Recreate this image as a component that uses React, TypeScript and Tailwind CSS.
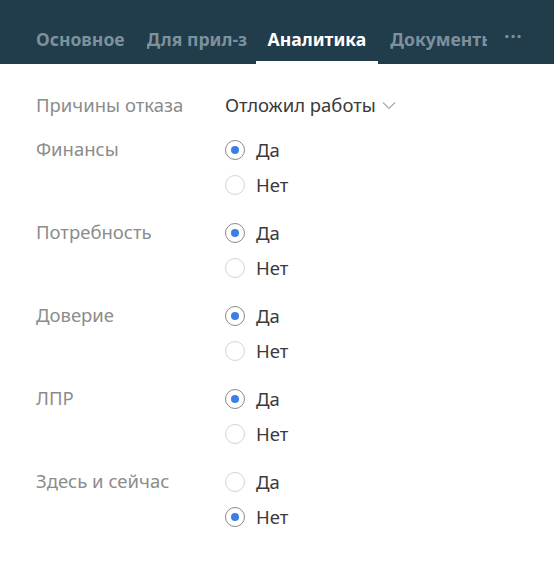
import { useState } from "react";

const font = { fontFamily: '"Noto Sans", "Open Sans", sans-serif' };

type Question = { label: string; value: "Да" | "Нет" };

const questions: Question[] = [
  { label: "Финансы", value: "Да" },
  { label: "Потребность", value: "Да" },
  { label: "Доверие", value: "Да" },
  { label: "ЛПР", value: "Да" },
  { label: "Здесь и сейчас", value: "Нет" },
];

const Radio = ({ checked, label }: { checked: boolean; label: string }) => (
  <label className="flex items-center h-[35px] gap-[11px] cursor-pointer">
    <span
      className={`w-[20px] h-[20px] rounded-full border flex items-center justify-center ${
        checked ? "border-[#8a8a8a]" : "border-[#d4d4d4]"
      }`}
    >
      {checked && <span className="w-[8px] h-[8px] rounded-full bg-[#3d7ee6]"></span>}
    </span>
    <span className="text-[18.5px] text-[#3a3a3a]">{label}</span>
  </label>
);

// Tab Item
const Tab = ({ label, active, className }: { label: string; active?: boolean; className?: string }) => (
  <div
    className={`h-full flex items-center shrink-0 overflow-hidden border-b-[3px] ${
      active ? "border-white px-[12px]" : "border-transparent"
    } ${className ?? ""}`}
  >
    <span
      className={`text-[17.6px] font-bold whitespace-nowrap pt-[18px] ${
        active ? "text-white" : "text-[#7d919c]"
      }`}
    >
      {label}
    </span>
  </div>
);

export default function App() {
  const [answers, setAnswers] = useState(questions.map((q) => q.value));

  return (
    <div className="w-[554px] h-[569px] bg-white overflow-hidden" style={font}>
      {/* Tabs header */}
      <div className="h-[64px] bg-[#213c4a] flex pl-[36px] overflow-hidden">
        <Tab label="Основное" className="mr-[22px]" />
        <Tab label="Для прил-з" className="w-[101px] mr-[8px]" />
        <Tab label="Аналитика" active className="mr-[12px]" />
        <Tab label="Документь" className="w-[97px] mr-[17px]" />
        <div className="h-full flex items-center pt-[8px] shrink-0">
          <span className="text-[18px] font-bold text-[#7d919c] tracking-[1px]">···</span>
        </div>
      </div>

      {/* Form */}
      <div className="pl-[36px] pt-[25px]">
        <div className="flex items-center h-[32px]">
          <div className="w-[189px] text-[18.5px] text-[#8c8c8c]">Причины отказа</div>
          <div className="flex items-center gap-[6px] text-[18.5px] text-[#3a3a3a]">
            Отложил работы
            <svg width="14" height="9" viewBox="0 0 14 9" fill="none">
              <path d="M1 1.5 L7 7.5 L13 1.5" stroke="#a9a9a9" strokeWidth="1.2" />
            </svg>
          </div>
        </div>

        <div className="mt-[11px] flex flex-col gap-[13px]">
          {questions.map((q, qi) => (
            <div key={q.label} className="flex">
              <div className="w-[189px] text-[18.5px] text-[#8c8c8c] leading-[35px] -mt-[1px]">{q.label}</div>
              <div className="flex flex-col">
                {(["Да", "Нет"] as const).map((opt) => (
                  <div
                    key={opt}
                    onClick={() => setAnswers((a) => a.map((v, j) => (j === qi ? opt : v)))}
                  >
                    <Radio checked={answers[qi] === opt} label={opt} />
                  </div>
                ))}
              </div>
            </div>
          ))}
        </div>
      </div>
    </div>
  );
}
